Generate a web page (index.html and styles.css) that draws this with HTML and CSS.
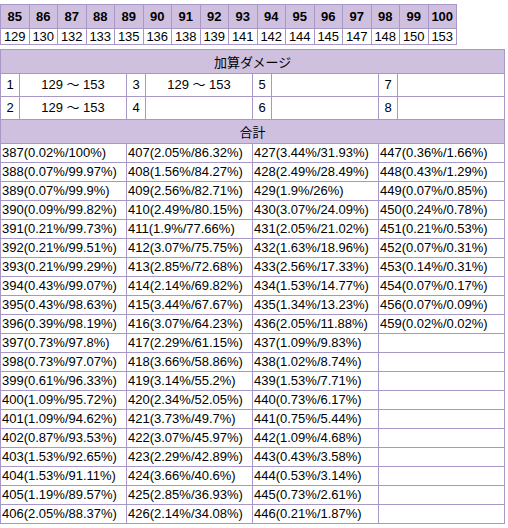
FILE: index.html
```html
<!DOCTYPE html>
<html lang="ja">
<head>
  <meta charset="UTF-8">
  <title>ダメージ計算</title>
  <link rel="stylesheet" href="styles.css">
</head>
<body>
  <table class="levels">
    <tr class="head">
      <th>85</th><th>86</th><th>87</th><th>88</th><th>89</th><th>90</th><th>91</th><th>92</th>
      <th>93</th><th>94</th><th>95</th><th>96</th><th>97</th><th>98</th><th>99</th><th>100</th>
    </tr>
    <tr class="vals">
      <td>129</td><td>130</td><td>132</td><td>133</td><td>135</td><td>136</td><td>138</td><td>139</td>
      <td>141</td><td>142</td><td>144</td><td>145</td><td>147</td><td>148</td><td>150</td><td>153</td>
    </tr>
  </table>

  <table class="damage">
    <colgroup>
      <col class="num"><col class="wide"><col class="num"><col class="wide">
      <col class="num"><col class="wide"><col class="num"><col class="wide">
    </colgroup>
    <tr class="title"><th colspan="8">加算ダメージ</th></tr>
    <tr class="add">
      <td>1</td><td class="range">129 〜 153</td>
      <td>3</td><td class="range">129 〜 153</td>
      <td>5</td><td></td>
      <td>7</td><td></td>
    </tr>
    <tr class="add">
      <td>2</td><td class="range">129 〜 153</td>
      <td>4</td><td></td>
      <td>6</td><td></td>
      <td>8</td><td></td>
    </tr>
    <tr class="title"><th colspan="8">合計</th></tr>
    <tr class="sum"><td colspan="2">387(0.02%/100%)</td><td colspan="2">407(2.05%/86.32%)</td><td colspan="2">427(3.44%/31.93%)</td><td colspan="2">447(0.36%/1.66%)</td></tr>
    <tr class="sum"><td colspan="2">388(0.07%/99.97%)</td><td colspan="2">408(1.56%/84.27%)</td><td colspan="2">428(2.49%/28.49%)</td><td colspan="2">448(0.43%/1.29%)</td></tr>
    <tr class="sum"><td colspan="2">389(0.07%/99.9%)</td><td colspan="2">409(2.56%/82.71%)</td><td colspan="2">429(1.9%/26%)</td><td colspan="2">449(0.07%/0.85%)</td></tr>
    <tr class="sum"><td colspan="2">390(0.09%/99.82%)</td><td colspan="2">410(2.49%/80.15%)</td><td colspan="2">430(3.07%/24.09%)</td><td colspan="2">450(0.24%/0.78%)</td></tr>
    <tr class="sum"><td colspan="2">391(0.21%/99.73%)</td><td colspan="2">411(1.9%/77.66%)</td><td colspan="2">431(2.05%/21.02%)</td><td colspan="2">451(0.21%/0.53%)</td></tr>
    <tr class="sum"><td colspan="2">392(0.21%/99.51%)</td><td colspan="2">412(3.07%/75.75%)</td><td colspan="2">432(1.63%/18.96%)</td><td colspan="2">452(0.07%/0.31%)</td></tr>
    <tr class="sum"><td colspan="2">393(0.21%/99.29%)</td><td colspan="2">413(2.85%/72.68%)</td><td colspan="2">433(2.56%/17.33%)</td><td colspan="2">453(0.14%/0.31%)</td></tr>
    <tr class="sum"><td colspan="2">394(0.43%/99.07%)</td><td colspan="2">414(2.14%/69.82%)</td><td colspan="2">434(1.53%/14.77%)</td><td colspan="2">454(0.07%/0.17%)</td></tr>
    <tr class="sum"><td colspan="2">395(0.43%/98.63%)</td><td colspan="2">415(3.44%/67.67%)</td><td colspan="2">435(1.34%/13.23%)</td><td colspan="2">456(0.07%/0.09%)</td></tr>
    <tr class="sum"><td colspan="2">396(0.39%/98.19%)</td><td colspan="2">416(3.07%/64.23%)</td><td colspan="2">436(2.05%/11.88%)</td><td colspan="2">459(0.02%/0.02%)</td></tr>
    <tr class="sum"><td colspan="2">397(0.73%/97.8%)</td><td colspan="2">417(2.29%/61.15%)</td><td colspan="2">437(1.09%/9.83%)</td><td colspan="2"></td></tr>
    <tr class="sum"><td colspan="2">398(0.73%/97.07%)</td><td colspan="2">418(3.66%/58.86%)</td><td colspan="2">438(1.02%/8.74%)</td><td colspan="2"></td></tr>
    <tr class="sum"><td colspan="2">399(0.61%/96.33%)</td><td colspan="2">419(3.14%/55.2%)</td><td colspan="2">439(1.53%/7.71%)</td><td colspan="2"></td></tr>
    <tr class="sum"><td colspan="2">400(1.09%/95.72%)</td><td colspan="2">420(2.34%/52.05%)</td><td colspan="2">440(0.73%/6.17%)</td><td colspan="2"></td></tr>
    <tr class="sum"><td colspan="2">401(1.09%/94.62%)</td><td colspan="2">421(3.73%/49.7%)</td><td colspan="2">441(0.75%/5.44%)</td><td colspan="2"></td></tr>
    <tr class="sum"><td colspan="2">402(0.87%/93.53%)</td><td colspan="2">422(3.07%/45.97%)</td><td colspan="2">442(1.09%/4.68%)</td><td colspan="2"></td></tr>
    <tr class="sum"><td colspan="2">403(1.53%/92.65%)</td><td colspan="2">423(2.29%/42.89%)</td><td colspan="2">443(0.43%/3.58%)</td><td colspan="2"></td></tr>
    <tr class="sum"><td colspan="2">404(1.53%/91.11%)</td><td colspan="2">424(3.66%/40.6%)</td><td colspan="2">444(0.53%/3.14%)</td><td colspan="2"></td></tr>
    <tr class="sum"><td colspan="2">405(1.19%/89.57%)</td><td colspan="2">425(2.85%/36.93%)</td><td colspan="2">445(0.73%/2.61%)</td><td colspan="2"></td></tr>
    <tr class="sum"><td colspan="2">406(2.05%/88.37%)</td><td colspan="2">426(2.14%/34.08%)</td><td colspan="2">446(0.21%/1.87%)</td><td colspan="2"></td></tr>
  </table>
</body>
</html>
```

FILE: styles.css
```css
body {
  margin: 4px 0 0 0;
  padding: 0;
  background-color: #fff;
  color: #000;
  font-family: 'Liberation Sans', 'Noto Sans CJK JP', sans-serif;
  font-size: 13px;
}
table {
  border-collapse: collapse;
}
th, td {
  border: 1px solid #a898c8;
  padding: 0;
}
th {
  background-color: #d0c0e0;
}
.levels {
  table-layout: fixed;
  width: 457px;
}
.levels th, .levels td {
  text-align: center;
}
.levels .head th {
  height: 23px;
  line-height: 23px;
  font-weight: bold;
}
.levels .vals td {
  height: 15px;
  line-height: 15px;
}
.damage {
  margin-top: 4px;
  table-layout: fixed;
  width: 505px;
}
.damage col.num {
  width: 19px;
}
.damage col.wide {
  width: 107px;
}
.damage .title th {
  height: 23px;
  line-height: 23px;
  font-family: 'Noto Sans CJK JP', sans-serif;
  font-weight: normal;
  font-size: 13px;
}
.damage .add td {
  height: 22px;
  line-height: 22px;
  text-align: center;
}
.damage .add td.range {
  text-align: center;
}
.damage .sum td {
  height: 18px;
  line-height: 18px;
  padding: 0 0 0 1px;
  white-space: nowrap;
}
```
